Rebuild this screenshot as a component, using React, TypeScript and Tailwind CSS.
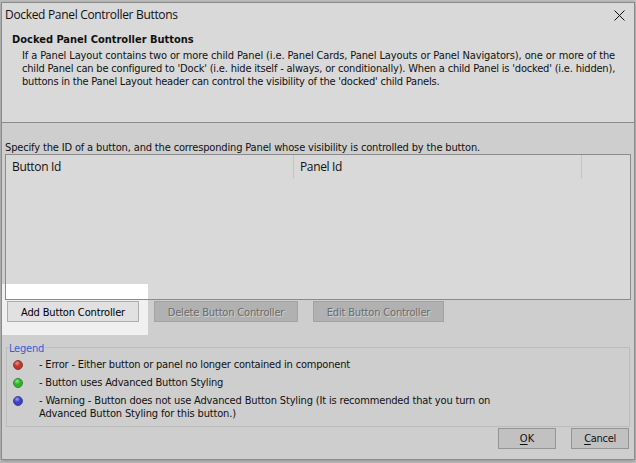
import type { ReactNode } from "react";

function Line({ className = "", children }: { className?: string; children: ReactNode }) {
  return <div className={`h-[13px] whitespace-nowrap leading-[13px] ${className}`}>{children}</div>;
}

function Dot({ id, light, main, dark }: { id: string; light: string; main: string; dark: string }) {
  return (
    <svg width="10" height="10" viewBox="0 0 10 10" className="block">
      <defs>
        <radialGradient id={id} cx="0.4" cy="0.3" r="0.7">
          <stop offset="0" stopColor={light} />
          <stop offset="0.5" stopColor={main} />
          <stop offset="1" stopColor={main} />
        </radialGradient>
      </defs>
      <circle cx="5" cy="5" r="4.5" fill={`url(#${id})`} stroke={dark} strokeWidth="0.9" />
    </svg>
  );
}

function PushButton({ className, children }: { className: string; children: ReactNode }) {
  return (
    <button className={`flex h-[21px] items-center justify-center whitespace-nowrap border leading-[13px] ${className}`}>
      {children}
    </button>
  );
}

const disabled =
  "border-[#a3a3a3] bg-[#b1b1b1] pt-[2px] text-[#6c6c6c] [text-shadow:1px_1px_0_#d0d0d0]";

export default function App() {
  return (
    <div className="h-[463px] w-[636px] overflow-hidden bg-[#c0c0c0] pl-px pt-[2px] text-[11px] text-[#111111] [font-family:'DejaVu_Sans_Condensed','DejaVu_Sans',sans-serif]">
      <div className="relative flex h-[458px] w-[634px] flex-col border border-[#8b8b8b] bg-[#cecece] shadow-[0_1px_4px_#8c8c8c]">
        <div className="absolute left-0 top-[281px] h-[51px] w-[146px] bg-[#f0f0f0]" />

        <header className="h-[120px] shrink-0 border-b border-[#8b8b8b] bg-[#d9d9d9]">
          <div className="flex h-6 items-center justify-between pl-[3px] pr-[9px]">
            <span className="whitespace-nowrap text-[12px] tracking-[-0.32px] [font-family:'Open_Sans',sans-serif]">
              Docked Panel Controller Buttons
            </span>
            <svg width="11" height="11" viewBox="0 0 11 11" stroke="#111111" strokeWidth="1">
              <path d="M0.5 0.5L10.5 10.5M10.5 0.5L0.5 10.5" />
            </svg>
          </div>
          <Line className="mt-[6px] pl-[10px] font-bold">Docked Panel Controller Buttons</Line>
          <div className="mt-[3px] pl-[20px]">
            <Line className="tracking-[-0.116px]">
              If a Panel Layout contains two or more child Panel (i.e. Panel Cards, Panel Layouts or Panel Navigators), one or more of the
            </Line>
            <Line className="tracking-[-0.19px]">
              child Panel can be configured to 'Dock' (i.e. hide itself - always, or conditionally). When a child Panel is 'docked' (i.e. hidden),
            </Line>
            <Line className="tracking-[-0.21px]">
              buttons in the Panel Layout header can control the visibility of the 'docked' child Panels.
            </Line>
          </div>
        </header>

        <Line className="mt-[18px] shrink-0 pl-[3px] tracking-[-0.153px]">
          Specify the ID of a button, and the corresponding Panel whose visibility is controlled by the button.
        </Line>

        <div className="relative ml-[3px] h-[146px] w-[626px] shrink-0 border border-[#8b8b8b] bg-[#d9d9d9]">
          <div className="absolute left-0 top-[129px] h-[15px] w-[142px] bg-white" />
          <div className="flex h-6 text-[12px] leading-6 tracking-[-0.35px] [font-family:'Open_Sans',sans-serif]">
            <div className="w-[288px] border-r border-[#c4c4c4] pl-[6px]">Button Id</div>
            <div className="w-[288px] border-r border-[#c4c4c4] pl-[6px]">Panel Id</div>
          </div>
        </div>

        <div className="relative mt-px flex h-[21px] shrink-0 pl-[5px]">
          <PushButton className="w-[132px] border-[#adadad] bg-[#e1e1e1] pt-[2px] tracking-[-0.15px] text-black">
            Add Button Controller
          </PushButton>
          <PushButton className={`ml-[15px] w-[144px] tracking-[-0.17px] ${disabled}`}>Delete Button Controller</PushButton>
          <PushButton className={`ml-[15px] w-[131px] tracking-[-0.17px] ${disabled}`}>Edit Button Controller</PushButton>
        </div>

        <section className="ml-1 mt-[25px] h-[80px] w-[624px] shrink-0 border border-[#bcbcbc]">
          <Line className="mt-[-6px] ml-[2px] w-[36px] bg-[#cecece] tracking-[-0.2px] text-[#3560d8]">Legend</Line>
          <div className="mt-[3px] grid grid-cols-[32px_1fr] gap-y-[5px] tracking-[-0.19px]">
            <div className="pl-[6px] pt-[2px]"><Dot id="red" light="#ec9489" main="#c03628" dark="#7c3a34" /></div>
            <Line>- Error - Either button or panel no longer contained in component</Line>
            <div className="pl-[6px] pt-[2px]"><Dot id="green" light="#8eea86" main="#2db52a" dark="#387a36" /></div>
            <Line>- Button uses Advanced Button Styling</Line>
            <div className="pl-[6px] pt-[2px]"><Dot id="blue" light="#97a0f2" main="#3a40c9" dark="#3c4086" /></div>
            <div>
              <Line className="tracking-[-0.16px]">
                - Warning - Button does not use Advanced Button Styling (It is recommended that you turn on
              </Line>
              <Line className="tracking-[-0.15px]">Advanced Button Styling for this button.)</Line>
            </div>
          </div>
        </section>

        <footer className="mt-px flex shrink-0 justify-end gap-[15px] pr-[5px]">
          <PushButton className="w-[58px] border-[#959595] bg-[#c1c1c1]">
            <span><span className="underline underline-offset-2">O</span>K</span>
          </PushButton>
          <PushButton className="w-[58px] border-[#959595] bg-[#c1c1c1] tracking-[-0.3px]">
            <span><span className="underline underline-offset-2">C</span>ancel</span>
          </PushButton>
        </footer>
      </div>
    </div>
  );
}
